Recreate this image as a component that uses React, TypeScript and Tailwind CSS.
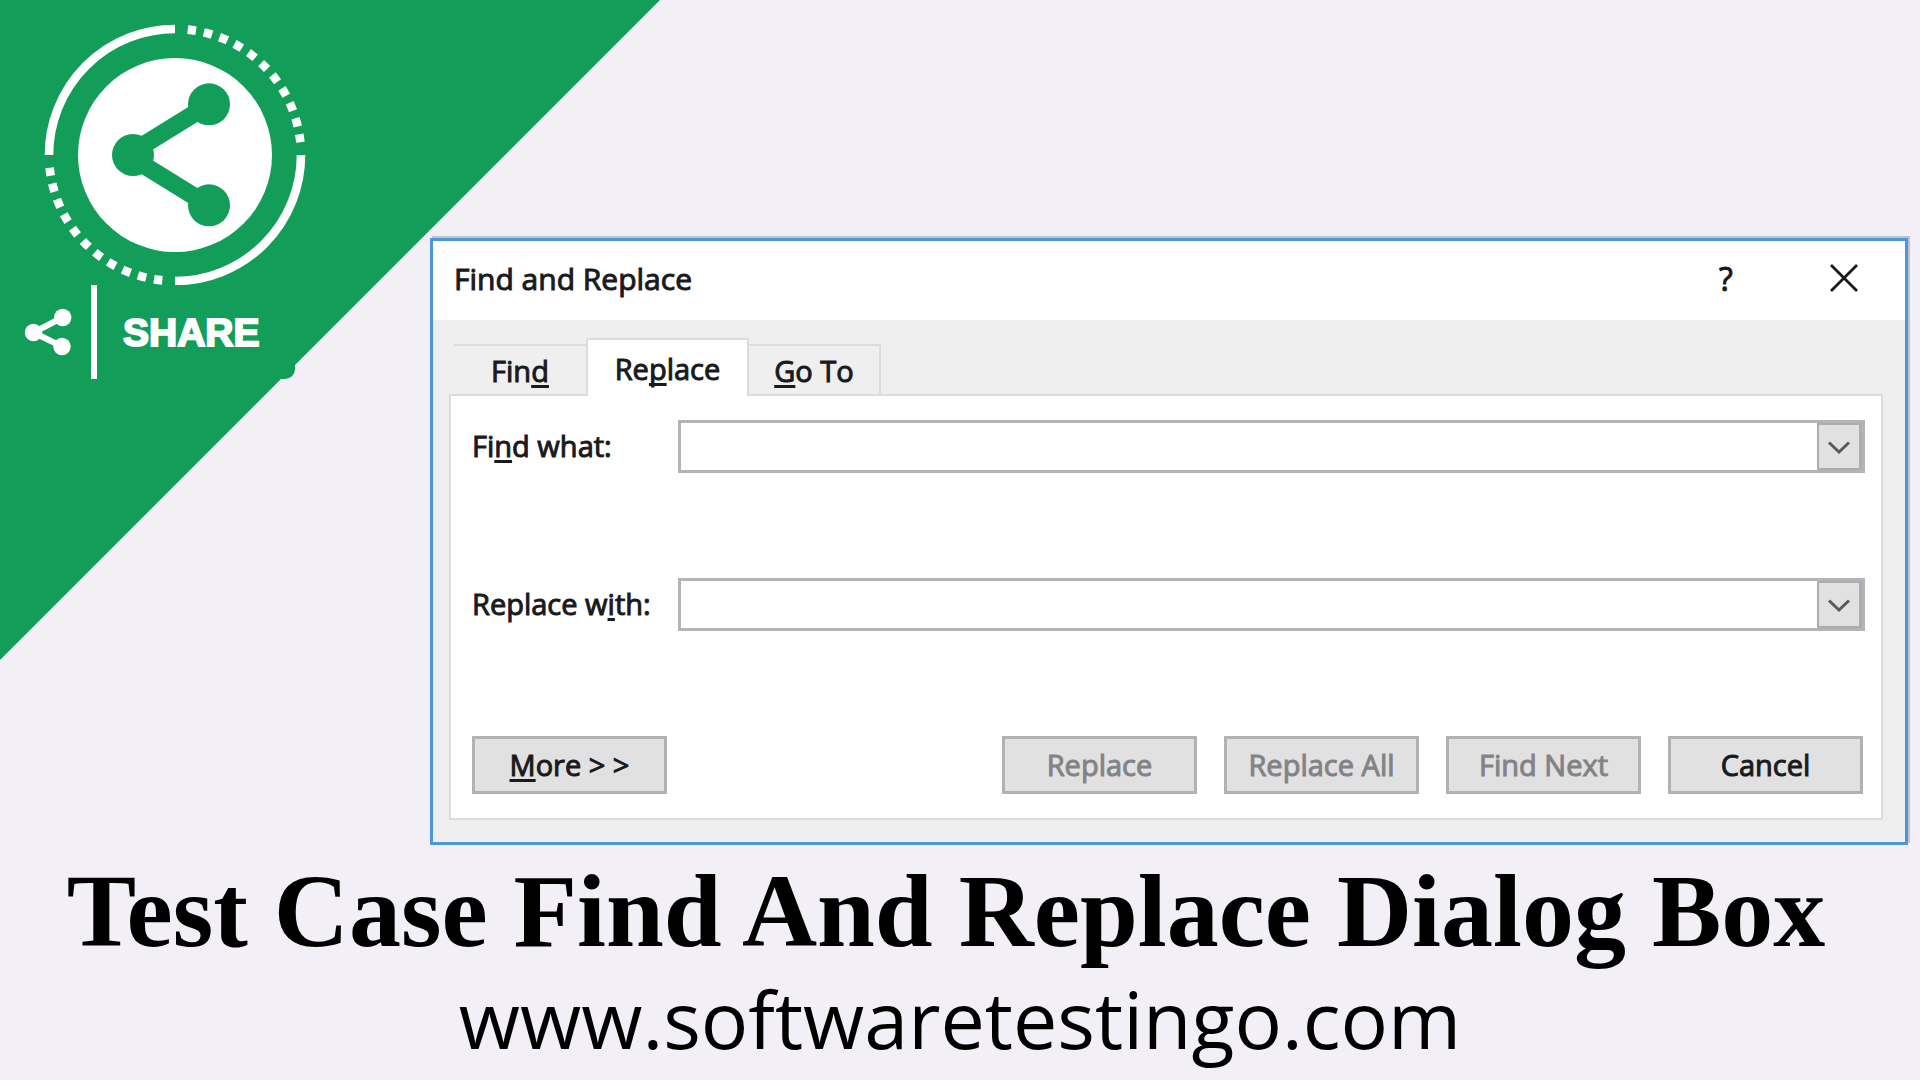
import React from "react";

function Key({ children }: { children: React.ReactNode }) {
  return (
    <span className="underline decoration-[3px] underline-offset-[3px] [text-decoration-skip-ink:none]">
      {children}
    </span>
  );
}

function ShareEmblem() {
  return (
    <svg viewBox="0 0 264 264" className="mt-[23px] ml-[43px] block size-[264px]" aria-hidden="true">
      <g fill="none" stroke="#fff" strokeWidth="8.6">
        <path d="M6 132A126 126 0 0 1 132 6" />
        <path d="M258 132A126 126 0 0 1 132 258" />
        <path d="M144.7 6.64A126 126 0 0 1 257.36 119.3" strokeDasharray="8.5 7.9" />
        <path d="M119.3 257.36A126 126 0 0 1 6.64 144.7" strokeDasharray="8.5 7.9" />
      </g>
      <circle cx="132" cy="132" r="97" fill="#fff" />
      <g fill="#129d59">
        <circle cx="90" cy="132" r="21" />
        <circle cx="166" cy="81.300" r="21" />
        <circle cx="166" cy="182.300" r="21" />
      </g>
      <path d="M94 126L166 81.500M94 138L166 182.500" stroke="#129d59" strokeWidth="17.500" />
    </svg>
  );
}

function ShareButton() {
  return (
    <button
      type="button"
      className="relative -mt-0.5 flex h-[94px] w-[295px] items-center rounded-br-[10px] bg-[#129d59] pl-6"
    >
      <svg viewBox="0 0 48 48" className="size-12 shrink-0" aria-hidden="true">
        <path d="M9.500 24.500L38.500 9.500M9.500 24.500L38 38.500" stroke="#fff" strokeWidth="6" />
        <g fill="#fff">
          <circle cx="9.500" cy="24.500" r="8.700" />
          <circle cx="38.700" cy="9.500" r="8.700" />
          <circle cx="38" cy="38.500" r="8.700" />
        </g>
      </svg>
      <span className="ml-[19px] h-full w-1.5 bg-white" />
      <span className="ml-[26px] font-['Liberation_Sans',sans-serif] text-[39px] leading-none font-bold text-white [-webkit-text-stroke:2px_#fff]">
        SHARE
      </span>
    </button>
  );
}

function Combo({ id, label }: { id: string; label: React.ReactNode }) {
  return (
    <div className="flex items-center">
      <label htmlFor={id} className="w-[206px] shrink-0 pb-0.5 whitespace-nowrap">
        {label}
      </label>
      <div className="flex h-[53px] min-w-0 flex-1 border-[3px] border-[#b4b4b8] bg-white">
        <input id={id} type="text" className="min-w-0 flex-1 px-2 outline-none" />
        <button
          type="button"
          aria-label="Show list"
          className="flex w-[45px] items-center justify-center border-2 border-r-[3px] border-[#adadb1] bg-[#e1e1e1]"
        >
          <svg viewBox="0 0 24 16" className="h-4 w-6" aria-hidden="true">
            <path d="M2 3.500L12 13L22 3.500" fill="none" stroke="#5a5a5e" strokeWidth="3" />
          </svg>
        </button>
      </div>
    </div>
  );
}

function PushButton({ children, disabled }: { children: React.ReactNode; disabled?: boolean }) {
  return (
    <button
      type="button"
      disabled={disabled}
      className="h-[58px] w-[195px] border-[3px] border-[#b2b2b4] bg-[#e1e1e1] whitespace-nowrap text-[#1a1a1e] disabled:text-[#838387]"
    >
      {children}
    </button>
  );
}

function FindReplaceDialog() {
  return (
    <section
      role="dialog"
      aria-labelledby="dialog-title"
      className="border-[3px] border-[#4b97de] bg-white font-['Open_Sans','Noto_Sans',sans-serif] text-[29px] leading-9 text-[#1a1a1e] shadow-[2px_-2px_0_#c3c2c8] [-webkit-text-stroke:1px]"
    >
      <header className="flex h-[79px] items-center pr-[46px] pb-1 pl-[21px]">
        <h2 id="dialog-title" className="flex-1 text-[30px]">
          Find and Replace
        </h2>
        <button type="button" aria-label="Help" className="mr-[91px] w-6 text-[32px]">
          ?
        </button>
        <button type="button" aria-label="Close">
          <svg viewBox="0 0 30 30" className="size-[30px]" aria-hidden="true">
            <path d="M2 1L28 27M28 1L2 27" stroke="#1a1a1a" strokeWidth="2.800" />
          </svg>
        </button>
      </header>
      <div className="bg-[#efefef] pt-[18px] pr-[22px] pb-[22px] pl-4">
        <div role="tablist" className="relative -mb-0.5 ml-[5px] flex items-end">
          <button type="button" role="tab" aria-selected="false" className="h-[52px] w-[132px] border-y-2 border-[#dcdcdc] pt-0.5">
            Fin<Key>d</Key>
          </button>
          <button type="button" role="tab" aria-selected="true" className="h-[58px] w-[163px] border-2 border-b-0 border-[#dcdcdc] bg-white pt-0.5">
            Re<Key>p</Key>lace
          </button>
          <button type="button" role="tab" aria-selected="false" className="h-[52px] w-[132px] border-2 border-l-0 border-[#dcdcdc] pt-0.5">
            <Key>G</Key>o To
          </button>
        </div>
        <div role="tabpanel" className="flex flex-col gap-[105px] border-2 border-[#dcdcdc] bg-white pt-6 pr-4 pb-6 pl-[21px]">
          <Combo id="find-what" label={<>Fi<Key>n</Key>d what:</>} />
          <Combo id="replace-with" label={<>Replace w<Key>i</Key>th:</>} />
          <div className="flex gap-[27px] pr-0.5">
            <div className="flex-1">
              <PushButton>
                <Key>M</Key>ore &gt; &gt;
              </PushButton>
            </div>
            <PushButton disabled>Replace</PushButton>
            <PushButton disabled>Replace All</PushButton>
            <PushButton disabled>Find Next</PushButton>
            <PushButton>Cancel</PushButton>
          </div>
        </div>
      </div>
    </section>
  );
}

export default function App() {
  return (
    <main className="relative isolate min-h-screen overflow-hidden bg-[#f2f0f6]">
      <svg viewBox="0 0 660 660" className="absolute top-0 left-0 -z-10 size-[660px]" aria-hidden="true">
        <path d="M0 0H660L0 660Z" fill="#129d59" />
      </svg>
      <div className="flex pr-3">
        <div className="w-[430px] shrink-0">
          <ShareEmblem />
          <ShareButton />
        </div>
        <div className="min-w-0 flex-1 pt-[238px]">
          <FindReplaceDialog />
        </div>
      </div>
      <footer className="text-center whitespace-nowrap text-black">
        <h1 className="pr-7 font-['Liberation_Serif',serif] text-[104px] leading-[132px] font-bold">
          Test Case Find And Replace Dialog Box
        </h1>
        <a href="#" className="-mt-3 block font-['Open_Sans','Noto_Sans',sans-serif] text-[79px] leading-[108px]">
          www.softwaretestingo.com
        </a>
      </footer>
    </main>
  );
}
